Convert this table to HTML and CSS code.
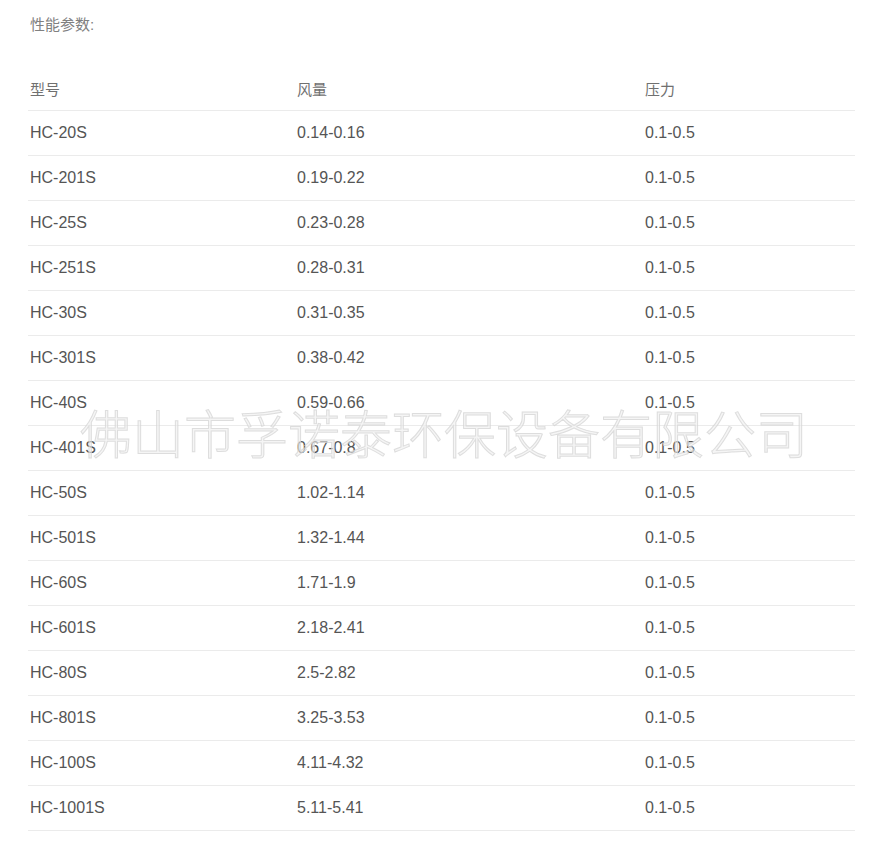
FILE: index.html
```html
<!DOCTYPE html>
<html lang="zh-CN">
<head>
<meta charset="utf-8">
<link rel="stylesheet" href="styles.css">
</head>
<body>
<div class="page">
  <div class="title">性能参数:</div>
  <table class="spec">
    <thead>
      <tr><th class="c1">型号</th><th class="c2">风量</th><th class="c3">压力</th></tr>
    </thead>
    <tbody>
      <tr><td>HC-20S</td><td>0.14-0.16</td><td>0.1-0.5</td></tr>
      <tr><td>HC-201S</td><td>0.19-0.22</td><td>0.1-0.5</td></tr>
      <tr><td>HC-25S</td><td>0.23-0.28</td><td>0.1-0.5</td></tr>
      <tr><td>HC-251S</td><td>0.28-0.31</td><td>0.1-0.5</td></tr>
      <tr><td>HC-30S</td><td>0.31-0.35</td><td>0.1-0.5</td></tr>
      <tr><td>HC-301S</td><td>0.38-0.42</td><td>0.1-0.5</td></tr>
      <tr><td>HC-40S</td><td>0.59-0.66</td><td>0.1-0.5</td></tr>
      <tr><td>HC-401S</td><td>0.67-0.8</td><td>0.1-0.5</td></tr>
      <tr><td>HC-50S</td><td>1.02-1.14</td><td>0.1-0.5</td></tr>
      <tr><td>HC-501S</td><td>1.32-1.44</td><td>0.1-0.5</td></tr>
      <tr><td>HC-60S</td><td>1.71-1.9</td><td>0.1-0.5</td></tr>
      <tr><td>HC-601S</td><td>2.18-2.41</td><td>0.1-0.5</td></tr>
      <tr><td>HC-80S</td><td>2.5-2.82</td><td>0.1-0.5</td></tr>
      <tr><td>HC-801S</td><td>3.25-3.53</td><td>0.1-0.5</td></tr>
      <tr><td>HC-100S</td><td>4.11-4.32</td><td>0.1-0.5</td></tr>
      <tr><td>HC-1001S</td><td>5.11-5.41</td><td>0.1-0.5</td></tr>
    </tbody>
  </table>
  <div class="watermark">佛山市孚诺泰环保设备有限公司</div>
</div>
</body>
</html>
```

FILE: styles.css
```css
html, body {
  margin: 0;
  padding: 0;
  background: #fff;
}
.page {
  position: relative;
  padding: 15px 31px 0 28px;
  font-family: "Liberation Sans", Arial, "Noto Sans CJK SC", sans-serif;
  color: #555;
}
.title {
  font-family: "Liberation Sans", "Noto Sans CJK SC", sans-serif;
  font-size: 15px;
  line-height: 20px;
  color: #808080;
  padding-left: 2px;
}
.spec {
  margin-top: 31px;
  width: 827px;
  border-collapse: collapse;
  table-layout: fixed;
  font-size: 16px;
}
.spec th,
.spec td {
  height: 44px;
  padding: 0 0 0 2px;
  text-align: left;
  vertical-align: middle;
  border-bottom: 1px solid #ebebeb;
  white-space: nowrap;
}
.spec th {
  font-weight: normal;
  color: #707070;
  font-family: "Noto Sans CJK SC", sans-serif;
  font-size: 15px;
}
.spec .c1 { width: 265px; }
.spec .c2 { width: 346px; }
.watermark {
  position: absolute;
  left: 80px;
  top: 402px;
  font-family: "Noto Sans CJK SC", sans-serif;
  font-weight: 300;
  font-size: 52px;
  line-height: 60px;
  white-space: nowrap;
  color: rgba(238, 238, 238, 0.6);
  -webkit-text-stroke: 1px rgba(210, 210, 210, 0.7);
  pointer-events: none;
}
```
